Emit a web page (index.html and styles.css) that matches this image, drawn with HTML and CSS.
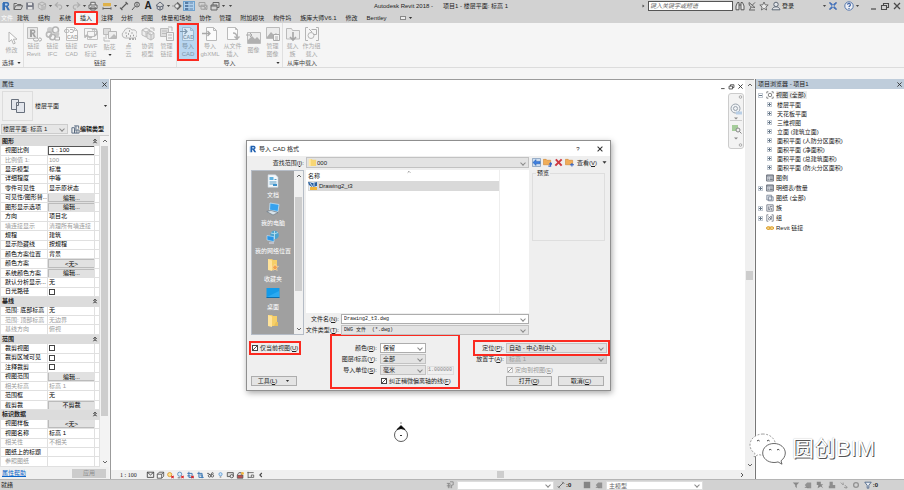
FILE: index.html
```html
<!DOCTYPE html>
<html lang="zh-CN">
<head>
<meta charset="utf-8">
<title>Autodesk Revit 2018</title>
<link rel="stylesheet" href="styles.css">
</head>
<body>
<svg class="defs" aria-hidden="true">
  <symbol id="i-revit" viewBox="0 0 10 10"><path d="M2 1h4.2a2.3 2.3 0 0 1 .6 4.4L9 9.2H6.6L4.8 5.8H4v3.4H2z" fill="#1f5fae"/><path d="M4 2.6h1.700a.9.9 0 0 1 0 1.800H4z" fill="#b9d4f2"/><path d="M1 2v7.200h1V2z" fill="#5b93d4"/></symbol>
  <symbol id="i-open" viewBox="0 0 10 10"><path d="M1 8.500V2.500h2.500l1 1H8v1.200M1 8.500l1.600-3.800H9.600L8 8.500z" fill="none" stroke="#555"/></symbol>
  <symbol id="i-save" viewBox="0 0 10 10"><path d="M1.200 1.500h6.600l1 1v6H1.200z" fill="#666a78"/><path d="M3 2h4v2.300H3zM2.800 6h4.600v2.500H2.800z" fill="#e6e6e6"/></symbol>
  <symbol id="i-sync" viewBox="0 0 10 10"><path d="M5 1l3.600 1.800v4L5 9 1.400 6.800v-4zM1.400 2.800L5 4.600l3.600-1.800M5 4.600V9" fill="none" stroke="#a8a8a8"/><circle cx="7" cy="7" r="2" fill="#b9b9b9"/></symbol>
  <symbol id="i-undo" viewBox="0 0 10 10"><path d="M1.200 4h5a2.200 2.200 0 0 1 0 4.200H5M4 1.400L1.200 4 4 6.400" fill="none" stroke="#a9a9a9" stroke-width="1.200"/></symbol>
  <symbol id="i-redo" viewBox="0 0 10 10"><path d="M8.800 4h-5a2.200 2.200 0 0 0 0 4.200H5M6 1.400L8.800 4 6 6.400" fill="none" stroke="#a9a9a9" stroke-width="1.200"/></symbol>
  <symbol id="i-print" viewBox="0 0 10 10"><path d="M2.800 4V1.300h4.400V4M1 4h8v3.600H1zM2.800 6h4.400v3H2.800z" fill="#eee" stroke="#555"/></symbol>
  <symbol id="i-measure" viewBox="0 0 10 10"><path d="M1 2h8v3.200H1z" fill="#e2ad34"/><path d="M1 7.500h8M1 6.300v2.400M9 6.300v2.400" stroke="#555" fill="none"/></symbol>
  <symbol id="i-dim" viewBox="0 0 10 10"><path d="M2 8L8 2M1 6.600L3.400 9M6.600 1L9 3.400" stroke="#444" fill="none" stroke-width="1.100"/></symbol>
  <symbol id="i-tag" viewBox="0 0 10 10"><circle cx="6" cy="3.600" r="2.400" fill="none" stroke="#444"/><path d="M1 9l3-3.600M6 2.400v2.400" stroke="#444"/></symbol>
  <symbol id="i-3d" viewBox="0 0 10 10"><path d="M1 4.500L5 1l4 3.500L5 6zM2.200 5v2.800L5 9.200l2.800-1.400V5M5 6v3" fill="none" stroke="#4d5566"/></symbol>
  <symbol id="i-section" viewBox="0 0 10 10"><path d="M5.400 1L9.400 5l-4 4zM0 5h3" fill="#444" stroke="#444" stroke-width=".5"/><circle cx="5" cy="5" r="2.300" fill="#eee" stroke="#444" stroke-width=".8"/></symbol>
  <symbol id="i-thin" viewBox="0 0 10 10"><path d="M1 2h3.400M1 5h3.400M1 8h3.400" stroke="#234f83" stroke-width="1.400"/><path d="M5.500 2H9M5.500 5H9M5.500 8H9" stroke="#234f83" stroke-width=".7"/></symbol>
  <symbol id="i-closewin" viewBox="0 0 10 10"><path d="M1 1.500h6v3.800H1zM3 4.200h6v4H3z" fill="none" stroke="#999"/><path d="M5.500 5l3.500 4M9 5L5.500 9" stroke="#999"/></symbol>
  <symbol id="i-switch" viewBox="0 0 10 10"><path d="M1 4h6v5H1zM3 4V1.500h6v5H7M1 5h6" fill="none" stroke="#555"/></symbol>
  <symbol id="i-caret" viewBox="0 0 4 4"><path d="M.4 1h3.200L2 3z" fill="#333"/></symbol>
  <symbol id="i-find" viewBox="0 0 10 10"><path d="M1 8.800V5l1.500-3.500h1.500V8.800zM9 8.800V5L7.500 1.500H6V8.800zM4 4h2" fill="#eee" stroke="#444"/></symbol>
  <symbol id="i-comm" viewBox="0 0 10 10"><path d="M2 1.500c0 4 2 5 6 5M2 1.500l6 5M5.500 4l2.500-2.600M2 9h6M4 6L2.600 9" fill="none" stroke="#555"/></symbol>
  <symbol id="i-star" viewBox="0 0 10 10"><path d="M5 1l1.200 2.800 3 .2-2.300 2 .7 3L5 7.400 2.400 9l.7-3L.8 4l3-.2z" fill="#eee" stroke="#555" stroke-width=".9"/></symbol>
  <symbol id="i-user" viewBox="0 0 10 10"><circle cx="5" cy="3.400" r="2.200" fill="#e5e9ee" stroke="#4b5767"/><path d="M1 8.800c.5-2 2-3 4-3s3.500 1 4 3z" fill="#e5e9ee" stroke="#4b5767"/></symbol>
  <symbol id="i-exch" viewBox="0 0 10 10"><path d="M1 2h2.500L9 8H6.500zM9 2H6.500L1 8h2.500z" fill="#2c62b8"/><path d="M1 1.500h2M7 1.500h2M1 8.500h2M7 8.500h2" stroke="#6a83b0"/></symbol>
  <symbol id="i-help" viewBox="0 0 10 10"><circle cx="5" cy="5" r="4.200" fill="#f2f5fa" stroke="#436aa8"/><path d="M3.600 3.800a1.400 1.400 0 1 1 2 1.300q-.6.300-.6 1M5 7v1" fill="none" stroke="#2c55a0" stroke-width="1.200"/></symbol>
  <symbol id="i-min" viewBox="0 0 10 10"><path d="M3 8h5" stroke="#333" stroke-width="1.200"/></symbol>
  <symbol id="i-restore" viewBox="0 0 10 10"><path d="M1.500 4.500h5v4h-5zM3.500 4.500v-2h5v4h-2" fill="none" stroke="#333" stroke-width="1.100"/></symbol>
  <symbol id="i-x" viewBox="0 0 10 10"><path d="M2 2l6 6M8 2L2 8" stroke="#333" stroke-width="1.300"/></symbol>

  <symbol id="r-arrow" viewBox="0 0 16 16"><path d="M5 2v10l2.600-2.400L9.400 14l1.800-.8-1.800-4H13z" fill="#fcfcfc" stroke="#b5b5b5"/></symbol>
  <symbol id="r-lrevit" viewBox="0 0 16 16"><path d="M1.500 1.500h10v11h-10z" fill="#e8e8e8" stroke="#bbb"/><path d="M4 3.500h3.500a2.200 2.200 0 0 1 .6 4.200L10 11H8L6.300 8H6v3H4zM6 5v1.500h1.300a.7.7 0 0 0 0-1.500z" fill="#a2a2a2"/><path d="M9 12h2a1.500 1.500 0 0 1 0 3H9a1.500 1.500 0 0 1 0-3zm4 0h1a1.500 1.500 0 0 1 0 3h-1" fill="#f5f5f5" stroke="#aaa"/></symbol>
  <symbol id="r-ifc" viewBox="0 0 16 16"><circle cx="5" cy="4" r="3" fill="#ccc"/><circle cx="10.500" cy="4" r="3" fill="none" stroke="#b4b4b4" stroke-width="1.600"/><circle cx="4" cy="8.500" r="2.600" fill="none" stroke="#bababa" stroke-width="1.600"/><circle cx="12" cy="8" r="2.400" fill="#c8c8c8"/><circle cx="7.500" cy="11" r="2.800" fill="none" stroke="#b4b4b4" stroke-width="1.600"/><path d="M10 11h4.500v3H10z" stroke="#aaa" fill="#f5f5f5"/></symbol>
  <symbol id="r-dwf" viewBox="0 0 16 16"><path d="M1.500 2.500h10v8h-10zM4.500 5.500h10v8h-10z" fill="#f5f5f5" stroke="#c0c0c0"/><path d="M2 12c0-3 2-3 3-2s2 3 4 1M9 4q5-3 5 2 0 3-3 4" fill="none" stroke="#b8b8b8" stroke-width="1.500"/></symbol>
  <symbol id="r-decal" viewBox="0 0 16 16"><path d="M1.500 1.500h7v6h-7z" fill="#ddd" stroke="#bbb"/><path d="M6.500 4.500h8v7h-8z" fill="#eee" stroke="#b8b8b8"/><path d="M2 10v4h6M4 8v4" stroke="#bbb" fill="none"/><path d="M8 11l4-4 2 2v2z" fill="#bbb"/></symbol>
  <symbol id="r-cloud" viewBox="0 0 16 16"><path d="M4 12a3.500 3.500 0 0 1-1-6.500A4.500 4.500 0 0 1 11 4a4 4 0 0 1 2 8z" fill="#f1f1f1" stroke="#b8b8b8"/><path d="M4.500 7h1M8 5h1M7 8h1M10.500 7h1M5 10h1M9 10h1M12 9.500h1" stroke="#999" stroke-width="1.500"/><path d="M8 13h7" stroke="#aaa" stroke-width="2" stroke-dasharray="2 1"/></symbol>
  <symbol id="r-coord" viewBox="0 0 16 16"><path d="M2 4l4-2 4 2v5l-4 2-4-2zM2 4l4 2 4-2M6 6v5" fill="#ededed" stroke="#bbb"/><path d="M7 7l4-2 3 2v5l-3 2-4-2zM7 7l4 2 3-2M11 9v5M10 2h4v3" fill="#e3e3e3" stroke="#bbb"/></symbol>
  <symbol id="r-manage" viewBox="0 0 16 16"><path d="M1.500 2.500h8v8h-8zM3 5h5M3 7.500h5" fill="#ddd" stroke="#bcbcbc"/><path d="M7.500 6.500h7v8h-7z" fill="#f2f2f2" stroke="#b5b5b5"/><path d="M9 9h4M9 12h4M9 1h4v4" stroke="#b5b5b5" fill="none"/></symbol>
  <symbol id="r-xml" viewBox="0 0 16 16"><path d="M4.500 1.500h7l3 3v10h-10zM11.500 1.500v3h3" fill="#fbfbfb" stroke="#b9b9b9"/><path d="M0 7.500h8M5.500 5L8 7.500 5.500 10" fill="none" stroke="#a8a8a8" stroke-width="1.300"/></symbol>
  <symbol id="r-file" viewBox="0 0 16 16"><path d="M2.500 1.500h8l2 2v10h-10zM10.500 1.500v2h2" fill="#fbfbfb" stroke="#bbb"/><path d="M8 7q4 0 4 5M9.500 10.500L12 13l2.500-2.500" fill="none" stroke="#b0b0b0" stroke-width="1.400"/></symbol>
  <symbol id="r-image" viewBox="0 0 16 16"><path d="M1.500 2.500h13v11h-13z" fill="#ececec" stroke="#bbb"/><path d="M2 13V10l4-4 3 3 2-2 3 3v3z" fill="#b0b0b0"/><path d="M0 5h6M4 3l2 2-2 2" fill="none" stroke="#aaa"/></symbol>
  <symbol id="r-images" viewBox="0 0 16 16"><path d="M1.500 1.500h13v11h-13z" fill="#ececec" stroke="#bbb"/><path d="M2 11l4-5 3 3 2-2 3 4v1H2z" fill="#b0b0b0"/><path d="M8.500 8.500h6v6h-6zM10 11h3M10 13h3" fill="#f5f5f5" stroke="#aaa"/></symbol>
  <symbol id="r-load" viewBox="0 0 16 16"><path d="M1.500 13V2.500h5l1 2h7V13z" fill="#eee" stroke="#bbb"/><path d="M8 6v8M5 11l3 3 3-3" fill="none" stroke="#a5a5a5" stroke-width="1.600"/></symbol>
  <symbol id="r-group" viewBox="0 0 16 16"><path d="M4 1.500H1.500v13H4M12 1.500h2.500v13H12" fill="none" stroke="#b5b5b5"/><circle cx="7" cy="9.500" r="3" fill="none" stroke="#b5b5b5"/><path d="M7.500 3.500h5v5h-3M5 3l3 3" fill="none" stroke="#b0b0b0"/></symbol>

  <symbol id="i-plan" viewBox="0 0 16 16"><path d="M1.500 1.500h7v10h-7z" fill="#e3e6ec" stroke="#68707d"/><path d="M6.500 4.500h8v10h-8z" fill="#e3e6ec" stroke="#68707d"/><path d="M8.500 4.500v3h-2" fill="none" stroke="#68707d"/></symbol>
  <symbol id="i-edit" viewBox="0 0 10 10"><path d="M1 3h3v6H1zM5.500 1v3.500M3.500 1h5v3M4 5.500h5V9H4zM6.500 5.500V9" fill="none" stroke="#51647c"/></symbol>
  <symbol id="i-chev2" viewBox="0 0 6 6"><path d="M1.500 3L3 1.200 4.500 3M1.500 5.200L3 3.400l1.500 1.800" fill="none" stroke="#222"/></symbol>
  <symbol id="i-up" viewBox="0 0 6 6"><path d="M1 4l2-2 2 2" fill="none" stroke="#666"/></symbol>
  <symbol id="i-down" viewBox="0 0 6 6"><path d="M1 2l2 2 2-2" fill="none" stroke="#666"/></symbol>
  <symbol id="i-right" viewBox="0 0 6 6"><path d="M2 1l2 2-2 2" fill="none" stroke="#555"/></symbol>
  <symbol id="i-left" viewBox="0 0 6 6"><path d="M4 1.500L2.500 3 4 4.500" fill="none" stroke="#444" stroke-width=".8"/></symbol>

  <symbol id="t-views" viewBox="0 0 10 10"><path d="M3 1H1v2M7 1h2v2M3 9H1V7M7 9h2V7" fill="none" stroke="#666"/><circle cx="5" cy="5" r="2.200" fill="none" stroke="#666"/></symbol>
  <symbol id="t-list" viewBox="0 0 10 10"><path d="M.8 1.200h8.400v7.600H.8z" fill="#e9edf3" stroke="#4c5461"/><path d="M1 2.500h8M2 5h1.500M4.500 5h4M2 7h1.500M4.500 7h4" stroke="#4c5461"/></symbol>
  <symbol id="t-sheet" viewBox="0 0 10 10"><path d="M1 1.500h6v6H1zM3 3.500h6v5H3z" fill="#e6ebf1" stroke="#768294"/></symbol>
  <symbol id="t-fam" viewBox="0 0 10 10"><path d="M1 1h8v8H1zM3 3v4h2V3h3M7 5v3" fill="#f2f2f5" stroke="#6b7280"/></symbol>
  <symbol id="t-grp" viewBox="0 0 10 10"><path d="M3 1H1v8h2M7 1h2v8H7M3 3l4 4M5 3h2v3" fill="none" stroke="#6b7280"/><circle cx="4.500" cy="6" r="1.500" fill="none" stroke="#6b7280"/></symbol>
  <symbol id="t-link" viewBox="0 0 10 10"><rect x=".7" y="3.500" width="4.600" height="3.200" rx="1.500" fill="#f5d890" stroke="#d8971d" stroke-width="1.200"/><rect x="4.900" y="3.500" width="4.600" height="3.200" rx="1.500" fill="#f5d890" stroke="#d8971d" stroke-width="1.200"/></symbol>

  <symbol id="p-doc" viewBox="0 0 14 14"><path d="M2 .8h7.500L12 3.300v10H2z" fill="#f4f8fb" stroke="#c5d2dc" stroke-width=".6"/><path d="M3.500 3h4v3h-4z" fill="#5fb4e3"/><path d="M8.500 5.500h2M3.500 8h7M3.500 10h7" stroke="#5a9cc4"/><path d="M7 10h4v2H7z" fill="#3c92cd"/></symbol>
  <symbol id="p-pc" viewBox="0 0 14 14"><path d="M4 1l9 1.500-1 7L3.500 8z" fill="#36a2ee" stroke="#cfe9fa" stroke-width=".7"/><path d="M.8 9.500L5 8.500l7 2-5 2.500z" fill="#d9e3ea" stroke="#567" stroke-width=".5"/></symbol>
  <symbol id="p-net" viewBox="0 0 14 14"><circle cx="8.500" cy="5" r="4.300" fill="#4ba3cf"/><path d="M5 3q4 2 7-.5M8.500 1v8" stroke="#c6e8f2" fill="none" stroke-width=".8"/><path d="M1 5.500l7 1.200v5L1 10z" fill="#2a96e6" stroke="#cfe9fa" stroke-width=".6"/><path d="M3 13h5" stroke="#dde"/></symbol>
  <symbol id="p-fav" viewBox="0 0 14 14"><path d="M2 1h4l1 1h4v10H2z" fill="#f6cf68"/><path d="M2 1l4 1.500V13l-4-1z" fill="#ffe39a"/><path d="M9 6l1 2.200 2.600.2-2 1.600.7 2.600L9 11.200l-2.300 1.400.7-2.600-2-1.600L8 8.200z" fill="#f2a04c" stroke="#fff0c9" stroke-width=".4"/></symbol>
  <symbol id="p-desk" viewBox="0 0 14 14"><path d="M.5 2h13v9.500H.5z" fill="#149be9"/><path d="M1 11L13 5v6z" fill="#2baaf2"/><path d="M.5 11.500h13" stroke="#0c6dad"/></symbol>
  <symbol id="p-lib" viewBox="0 0 14 14"><path d="M2 1h4l1 1h4v10H2z" fill="#f6cf68"/><path d="M2 1l4 1.500V13l-4-1z" fill="#ffe39a"/><path d="M10 8h2v4h-4z" fill="#e8c05b"/></symbol>
  <symbol id="f-folder" viewBox="0 0 10 10"><path d="M1 1h3l1 1h4v7H1z" fill="#f7d675"/><path d="M1 1h2v8H1z" fill="#ffe9a8"/></symbol>
  <symbol id="f-dwg" viewBox="0 0 10 10"><path d="M1 1h8v8H1z" fill="#e9eef6"/><path d="M0 1l5 1 4-1v4L4 6 1 4z" fill="#275f9f"/><path d="M2 6h7v3H2z" fill="#f2b53a"/><path d="M2 2l3 4M6 2v3" stroke="#fff" stroke-width=".8"/></symbol>
  <symbol id="f-back" viewBox="0 0 10 10"><path d="M.5.500h9v9h-9z" fill="#cfdff0" stroke="#8ca4bf"/><path d="M1 5l3.500-3.200v2H9v2.600H4.500v2z" fill="#3d7fe0" stroke="#1e55a8" stroke-width=".5"/></symbol>
  <symbol id="f-up" viewBox="0 0 10 10"><path d="M.5 1.500h3l1 1h4v5h-8z" fill="#f0ad58" stroke="#cc7d28" stroke-width=".6"/><path d="M6 9h2.500V5.500M7 7l1.500-1.700L10 7" fill="none" stroke="#3366c8" stroke-width="1.200"/></symbol>
  <symbol id="f-del" viewBox="0 0 10 10"><path d="M2 1.500l6.500 7M8.500 1.500L1.500 8.500" stroke="#cc3840" stroke-width="2.200"/></symbol>
  <symbol id="f-new" viewBox="0 0 10 10"><path d="M.5 1.500h3l1 1h4v5h-8z" fill="#f0ad58" stroke="#cc7d28" stroke-width=".6"/><path d="M5.500 7.500H10M7.700 5.500v4" stroke="#3366c8" stroke-width="1.200"/></symbol>

  <symbol id="v-detail" viewBox="0 0 10 10"><path d="M1 1.500h8v6.500H1zM1 1.500L5 5l4-3.500" fill="#eee" stroke="#333"/></symbol>
  <symbol id="v-style" viewBox="0 0 10 10"><path d="M1 4h5.500v5H1zM1 4l2.500-2.500H9L6.500 4M9 1.500V6.500L6.500 9" fill="#f5f5f5" stroke="#444"/></symbol>
  <symbol id="v-sun" viewBox="0 0 10 10"><circle cx="4" cy="4.500" r="2.600" fill="#ffe28b" stroke="#d5952c"/><path d="M6 6l3 3M9 6L6 9" stroke="#d22" stroke-width="1.300"/></symbol>
  <symbol id="v-shadow" viewBox="0 0 10 10"><circle cx="4" cy="4" r="2.600" fill="#dcecf8" stroke="#4c86b8"/><path d="M1.500 8.500H5" stroke="#555"/><path d="M6 6l3 3M9 6L6 9" stroke="#d22" stroke-width="1.300"/></symbol>
  <symbol id="v-crop" viewBox="0 0 10 10"><path d="M3 1v7h6M1 3h6v6M1 6h4" fill="none" stroke="#3e79b5" stroke-width="1.200"/><path d="M6 6l3 3M9 6L6 9" stroke="#d22" stroke-width="1.300"/></symbol>
  <symbol id="v-crop2" viewBox="0 0 10 10"><path d="M3 1v7h6M1 3h6v6M4 5h3v3" fill="none" stroke="#3e79b5" stroke-width="1.200"/></symbol>
  <symbol id="v-glass" viewBox="0 0 10 10"><path d="M.8 3h2l1.500 2M9 3L7 2 5.500 5" fill="none" stroke="#444"/><circle cx="3.800" cy="6" r="1.600" fill="none" stroke="#444"/><circle cx="7.300" cy="6" r="1.600" fill="none" stroke="#444"/></symbol>
  <symbol id="v-bulb" viewBox="0 0 10 10"><circle cx="5" cy="4" r="2" fill="#cde6fb" stroke="#5a97cf"/><path d="M4 7.500h2" stroke="#555"/></symbol>
  <symbol id="v-temp" viewBox="0 0 10 10"><path d="M1 2h7.500v5H1z" fill="#ddd" stroke="#444"/><circle cx="6.500" cy="6.500" r="2" fill="#eee" stroke="#444"/></symbol>
  <symbol id="v-anal" viewBox="0 0 10 10"><path d="M1 5h7v4H1z" fill="#c05050" stroke="#555"/><path d="M1 5l2-3h3v3" fill="#ddd" stroke="#555"/><circle cx="7.500" cy="3" r="1.800" fill="#f5b63c"/></symbol>
  <symbol id="v-cons" viewBox="0 0 10 10"><path d="M1 2h8M2 1v8M2 8h4M6 5h3v3H6z" fill="none" stroke="#555"/></symbol>

  <symbol id="s-a" viewBox="0 0 10 10"><path d="M1 2h8L6 5v4L4 7V5z" fill="#7d7d7d"/></symbol>
  <symbol id="s-b" viewBox="0 0 10 10"><path d="M1 5l3-3h5v7H4z" fill="#878787"/><path d="M1 8h5" stroke="#777"/></symbol>
  <symbol id="s-c" viewBox="0 0 10 10"><path d="M1 1h5v3h3L7 6l2 3-3-2-4 2 1-4H1z" fill="#7a7a7a"/></symbol>
  <symbol id="s-d" viewBox="0 0 10 10"><path d="M2 1h4v4h3v4H1V6h1z" fill="#828282"/></symbol>
  <symbol id="s-sq" viewBox="0 0 10 10"><path d="M1 1h8v8H1z" fill="#777"/></symbol>
  <symbol id="s-e" viewBox="0 0 10 10"><path d="M1 2l3 3V2M5 8h4M6 5l3 3-2 1.500" fill="none" stroke="#888"/></symbol>
  <symbol id="s-gear" viewBox="0 0 10 10"><circle cx="5" cy="5" r="3" fill="none" stroke="#888" stroke-width="1.600"/></symbol>
  <symbol id="s-filter" viewBox="0 0 10 10"><path d="M1 1.500h8L6 5.500v3.500H4V5.500z" fill="#e7edf5" stroke="#3f5a80"/></symbol>
  <symbol id="s-work" viewBox="0 0 10 10"><path d="M1 3h4v6M3 3v6M5 1h4v4H7v4M1 6h4" fill="none" stroke="#777"/></symbol>
</svg>

<header class="titlebar">
  <div class="qat">
    <svg class="cell"><use href="#i-revit"/></svg>
    <svg class="cell"><use href="#i-open"/></svg>
    <svg class="cell"><use href="#i-save"/></svg>
    <svg class="cell"><use href="#i-sync"/></svg>
    <svg class="caret"><use href="#i-caret"/></svg>
    <svg class="cell"><use href="#i-undo"/></svg>
    <svg class="caret"><use href="#i-caret"/></svg>
    <svg class="cell"><use href="#i-redo"/></svg>
    <svg class="caret"><use href="#i-caret"/></svg>
    <svg class="cell"><use href="#i-print"/></svg>
    <span class="sep"></span>
    <svg class="cell"><use href="#i-measure"/></svg>
    <svg class="caret"><use href="#i-caret"/></svg>
    <svg class="cell"><use href="#i-dim"/></svg>
    <svg class="cell"><use href="#i-tag"/></svg>
    <b class="letter">A</b>
    <svg class="cell"><use href="#i-3d"/></svg>
    <svg class="caret"><use href="#i-caret"/></svg>
    <svg class="cell"><use href="#i-section"/></svg>
    <svg class="cell on"><use href="#i-thin"/></svg>
    <span class="sep"></span>
    <svg class="cell"><use href="#i-closewin"/></svg>
    <svg class="cell"><use href="#i-switch"/></svg>
    <svg class="caret"><use href="#i-caret"/></svg>
    <span class="sep"></span>
    <svg class="caret"><use href="#i-caret"/></svg>
  </div>
  <p class="apptitle"><span>Autodesk Revit 2018 -</span><span>项目1 - 楼层平面: 标高 1</span></p>
  <div class="infocenter">
    <svg class="caret turned"><use href="#i-caret"/></svg>
    <input class="search" type="text" placeholder="键入关键字或短语" aria-label="搜索">
    <svg class="cell"><use href="#i-find"/></svg>
    <svg class="cell"><use href="#i-comm"/></svg>
    <svg class="cell"><use href="#i-star"/></svg>
    <svg class="cell"><use href="#i-user"/></svg>
    <a class="login" href="#">登录</a>
    <svg class="caret"><use href="#i-caret"/></svg>
    <svg class="cell"><use href="#i-exch"/></svg>
    <svg class="cell help"><use href="#i-help"/></svg>
    <svg class="caret"><use href="#i-caret"/></svg>
  </div>
  <div class="winctl">
    <button aria-label="最小化"><svg><use href="#i-min"/></svg></button>
    <button aria-label="还原"><svg><use href="#i-restore"/></svg></button>
    <button aria-label="关闭"><svg><use href="#i-x"/></svg></button>
  </div>
</header>

<nav class="tabs">
  <div class="tabgroup wide"><a class="file" href="#">文件</a><a href="#">建筑</a><a href="#">结构</a><a href="#">系统</a><a class="active" href="#">插入</a><a href="#">注释</a></div>
  <div class="tabgroup"><a href="#">分析</a><a href="#">视图</a><a href="#">体量和场地</a><a href="#">协作</a><a href="#">管理</a></div>
  <div class="tabgroup wide last"><a href="#">附加模块</a><a href="#">构件坞</a><a href="#">族库大师V6.1</a><a href="#">修改</a><a href="#">Bentley</a></div>
  <button class="tabmenu" aria-label="选项卡显示"><span></span><svg class="caret"><use href="#i-caret"/></svg></button>
</nav>

<section class="ribbon">
  <div class="panel">
    <div class="tools"><button class="tool w24"><svg><use href="#r-arrow"/></svg>修改</button></div>
    <h2 class="caption dark">选择 <svg><use href="#i-caret"/></svg></h2>
  </div>
  <div class="panel">
    <div class="tools">
      <button class="tool"><svg><use href="#r-lrevit"/></svg>链接<br>Revit</button>
      <button class="tool"><svg><use href="#r-ifc"/></svg>链接<br>IFC</button>
      <button class="tool"><svg viewBox="0 0 16 16"><path d="M2.500 1.500h8l3 3v10h-11zM10.500 1.500v3h3" fill="#fafafa" stroke="#c0c0c0"/><path d="M2 3.500h1.500a1.500 1.500 0 0 1 0 3H2a1.500 1.500 0 0 1 0-3zm4 0h2a1.500 1.500 0 0 1 0 3H6" fill="none" stroke="#b5b5b5"/><text x="3" y="13" class="glyph">CAD</text></svg>链接<br>CAD</button>
      <button class="tool"><svg><use href="#r-dwf"/></svg>DWF<br>标记</button>
      <button class="tool"><svg><use href="#r-decal"/></svg>贴花<svg class="drop"><use href="#i-caret"/></svg></button>
      <button class="tool"><svg><use href="#r-cloud"/></svg>点<br>云</button>
      <button class="tool"><svg><use href="#r-coord"/></svg>协调<br>模型</button>
      <button class="tool"><svg><use href="#r-manage"/></svg>管理<br>链接</button>
    </div>
    <h2 class="caption">链接</h2>
  </div>
  <div class="panel">
    <div class="tools">
      <button class="tool w22 selected"><svg viewBox="0 0 16 16"><path d="M2.500 1.500h8l3 3v10h-11zM10.500 1.500v3h3" fill="#d9e9f7" stroke="#9cb9d2"/><path d="M0 5.500h7M4.500 3L7 5.500 4.500 8" fill="none" stroke="#7f98ae" stroke-width="1.200"/><text x="3" y="13" class="glyph glyph-on">CAD</text></svg>导入<br>CAD</button>
      <button class="tool w22"><svg><use href="#r-xml"/></svg>导入<br>gbXML</button>
      <button class="tool w24"><svg><use href="#r-file"/></svg>从文件<br>插入</button>
      <button class="tool"><svg><use href="#r-image"/></svg>图像</button>
      <button class="tool"><svg><use href="#r-images"/></svg>管理<br>图像</button>
    </div>
    <h2 class="caption launcher">导入<svg><use href="#i-caret"/></svg></h2>
  </div>
  <div class="panel">
    <div class="tools">
      <button class="tool"><svg><use href="#r-load"/></svg>载入<br>族</button>
      <button class="tool"><svg><use href="#r-group"/></svg>作为组<br>载入</button>
    </div>
    <h2 class="caption">从库中载入</h2>
  </div>
</section>

<main class="workspace">
  <aside class="props">
    <h2 class="dockhead">属性<svg><use href="#i-x"/></svg></h2>
    <div class="typesel"><span class="thumb"><svg><use href="#i-plan"/></svg></span><span>楼层平面</span><svg class="caret"><use href="#i-caret"/></svg></div>
    <div class="instance">
      <span class="pick"><select aria-label="实例"><option>楼层平面: 标高 1</option></select></span>
      <button><svg><use href="#i-edit"/></svg>编辑类型</button>
    </div>
    <div class="gridwrap">
      <table class="grid">
        <colgroup><col class="c-name"><col class="c-val"><col class="c-btn"></colgroup>
        <tbody>
        <tr class="group"><th colspan="2">图形</th><td><svg><use href="#i-chev2"/></svg></td></tr>
        <tr><th><label for="scale">视图比例</label></th><td><input id="scale" class="box" value="1 : 100"></td><td></td></tr>
        <tr class="off"><th>比例值 1:</th><td>100</td><td></td></tr>
        <tr><th>显示模型</th><td>标准</td><td></td></tr>
        <tr><th>详细程度</th><td>中等</td><td></td></tr>
        <tr><th>零件可见性</th><td>显示原状态</td><td></td></tr>
        <tr><th>可见性/图形替...</th><td><button>编辑...</button></td><td></td></tr>
        <tr><th>图形显示选项</th><td><button>编辑...</button></td><td></td></tr>
        <tr><th>方向</th><td>项目北</td><td></td></tr>
        <tr class="off"><th>墙连接显示</th><td>清理所有墙连接</td><td></td></tr>
        <tr><th>规程</th><td>建筑</td><td></td></tr>
        <tr><th>显示隐藏线</th><td>按规程</td><td></td></tr>
        <tr><th>颜色方案位置</th><td>背景</td><td></td></tr>
        <tr><th>颜色方案</th><td><button>&lt;无&gt;</button></td><td></td></tr>
        <tr><th>系统颜色方案</th><td><button>编辑...</button></td><td></td></tr>
        <tr><th>默认分析显示...</th><td>无</td><td></td></tr>
        <tr><th><label for="sun">日光路径</label></th><td><input id="sun" type="checkbox"></td><td></td></tr>
        <tr class="group"><th colspan="2">基线</th><td><svg><use href="#i-chev2"/></svg></td></tr>
        <tr><th>范围: 底部标高</th><td>无</td><td></td></tr>
        <tr class="off"><th>范围: 顶部标高</th><td>无边界</td><td></td></tr>
        <tr class="off"><th>基线方向</th><td>俯视</td><td></td></tr>
        <tr class="group"><th colspan="2">范围</th><td><svg><use href="#i-chev2"/></svg></td></tr>
        <tr><th><label for="crop">裁剪视图</label></th><td><input id="crop" type="checkbox"></td><td></td></tr>
        <tr><th><label for="cropvis">裁剪区域可见</label></th><td><input id="cropvis" type="checkbox"></td><td></td></tr>
        <tr><th><label for="anno">注释裁剪</label></th><td><input id="anno" type="checkbox"></td><td></td></tr>
        <tr><th>视图范围</th><td><button>编辑...</button></td><td></td></tr>
        <tr class="off"><th>相关标高</th><td>标高 1</td><td></td></tr>
        <tr><th>范围框</th><td>无</td><td></td></tr>
        <tr><th>截剪裁</th><td><button>不剪裁</button></td><td></td></tr>
        <tr class="group"><th colspan="2">标识数据</th><td><svg><use href="#i-chev2"/></svg></td></tr>
        <tr><th>视图样板</th><td><button>&lt;无&gt;</button></td><td></td></tr>
        <tr><th>视图名称</th><td>标高 1</td><td></td></tr>
        <tr class="off"><th>相关性</th><td>不相关</td><td></td></tr>
        <tr><th>图纸上的标题</th><td></td><td></td></tr>
        <tr class="off"><th>参照图纸</th><td></td><td></td></tr>
        </tbody>
      </table>
      <div class="vscroll"><svg><use href="#i-up"/></svg><span class="thumbbar"></span><svg><use href="#i-down"/></svg></div>
    </div>
    <footer class="propfoot"><a href="#">属性帮助</a><button disabled>应用</button></footer>
  </aside>

  <section class="view">
    <div class="drawing">
      <div class="sheet">
        <svg class="marker" viewBox="0 0 16 22"><path d="M7 1h2" stroke="#888"/><circle cx="8" cy="13" r="6.500" fill="#fff" stroke="#333" stroke-width=".8"/><path d="M4 7.500L8 3.500l4 4Q8 5.500 4 7.500z" fill="#000" stroke="#000" stroke-width=".7"/><path d="M7 13.500h2" stroke="#333"/></svg>
        <div class="mdi"><svg><use href="#i-min"/></svg><svg><use href="#i-restore"/></svg><svg><use href="#i-x"/></svg></div>
        <div class="navbar">
          <svg viewBox="0 0 14 54"><circle cx="11.500" cy="3" r="1.300" fill="none" stroke="#aaa"/><circle cx="6.500" cy="14.500" r="4.500" fill="#eef1f4" stroke="#9aa3ad"/><circle cx="6.500" cy="14.500" r="2" fill="none" stroke="#9aa3ad"/><path d="M7 17.500h6v3H7z" fill="#b9cfe6"/><path d="M5 23.500h4l-2 2zM5 43.500h4l-2 2z" fill="#888"/><path d="M1 26.500h12" stroke="#ccc"/><path d="M3 31h6v6H3z" fill="#a5cc9a"/><circle cx="9" cy="36" r="2" fill="#eee" stroke="#888"/><path d="M10.500 37.500l2 2" stroke="#888"/><circle cx="11.500" cy="51" r="1.300" fill="none" stroke="#aaa"/></svg>
        </div>
      </div>
      <div class="vscroll"><svg><use href="#i-up"/></svg><span class="thumbbar"></span><svg><use href="#i-down"/></svg></div>
    </div>
    <div class="viewbar">
      <span class="ratio">1 : 100</span>
      <div class="viewicons">
        <svg><use href="#v-detail"/></svg><svg><use href="#v-style"/></svg><svg><use href="#v-sun"/></svg><svg><use href="#v-shadow"/></svg><svg><use href="#v-crop"/></svg><svg><use href="#v-crop2"/></svg><svg><use href="#v-glass"/></svg><svg><use href="#v-bulb"/></svg><svg><use href="#v-temp"/></svg><svg><use href="#v-anal"/></svg><svg><use href="#v-cons"/></svg><svg><use href="#i-left"/></svg>
      </div>
      <div class="hscroll"><span class="thumbbar"></span><svg><use href="#i-right"/></svg></div>
    </div>
  </section>

  <aside class="browser">
    <h2 class="dockhead">项目浏览器 - 项目1<svg><use href="#i-x"/></svg></h2>
    <ul class="tree">
      <li><div class="node"><i class="exp"></i><svg><use href="#t-views"/></svg><span class="hot">视图 (全部)</span></div>
        <ul>
          <li><i class="exp plus"></i>楼层平面</li>
          <li><i class="exp plus"></i>天花板平面</li>
          <li><i class="exp plus"></i>三维视图</li>
          <li><i class="exp plus"></i>立面 (建筑立面)</li>
          <li><i class="exp plus"></i>面积平面 (人防分区面积)</li>
          <li><i class="exp plus"></i>面积平面 (净面积)</li>
          <li><i class="exp plus"></i>面积平面 (总建筑面积)</li>
          <li><i class="exp plus"></i>面积平面 (防火分区面积)</li>
        </ul>
      </li>
      <li><div class="node"><i class="exp none"></i><svg><use href="#t-list"/></svg><span>图例</span></div></li>
      <li><div class="node"><i class="exp plus"></i><svg><use href="#t-list"/></svg><span>明细表/数量</span></div></li>
      <li><div class="node"><i class="exp none"></i><svg><use href="#t-sheet"/></svg><span>图纸 (全部)</span></div></li>
      <li><div class="node"><i class="exp plus"></i><svg><use href="#t-fam"/></svg><span>族</span></div></li>
      <li><div class="node"><i class="exp plus"></i><svg><use href="#t-grp"/></svg><span>组</span></div></li>
      <li><div class="node"><i class="exp none"></i><svg><use href="#t-link"/></svg><span>Revit 链接</span></div></li>
    </ul>
  </aside>

  <div class="watermark">
    <svg viewBox="0 0 38 34"><g fill="#fff" stroke="#888" stroke-width=".8"><path d="M14 2C6.500 2 1 7 1 13c0 3.500 2 6.500 5 8.500L5 25l4.500-2.500c1.500.5 3 .7 4.500.7 7.500 0 12.500-4.500 12.500-10.200S21.500 2 14 2z" stroke-dasharray="2 1.500"/><path d="M25 11.500c-6.500 0-11.300 4.300-11.300 9.500S18.500 30.500 25 30.500c1.400 0 2.800-.2 4-.6l4 2.300-1-3.400c2.500-1.800 4.300-4.600 4.300-7.800 0-5.200-4.800-9.500-11.300-9.500z" stroke="#444"/></g><path d="M8 9q1.300-1.500 2.600 0M18 9q1.300-1.500 2.600 0M20 18q1.200-1.300 2.400 0M28 18q1.200-1.300 2.400 0" fill="none" stroke="#444"/></svg>
    <span>圆创BIM</span>
  </div>
</main>

<footer class="status">
  <span class="ready">就绪</span>
  <svg><use href="#s-work"/></svg>
  <span class="pick"><select aria-label="工作集"><option></option></select></span>
  <svg><use href="#i-dim"/></svg><span class="count">:0</span>
  <svg><use href="#s-sq"/></svg><svg><use href="#s-b"/></svg>
  <span class="pick"><select aria-label="设计选项"><option>主模型</option></select></span>
  <div class="selicons"><svg><use href="#s-a"/></svg><svg><use href="#s-b"/></svg><svg><use href="#s-c"/></svg><svg><use href="#s-d"/></svg><svg><use href="#s-e"/></svg><svg><use href="#s-gear"/></svg><svg><use href="#s-filter"/></svg><span>:0</span></div>
</footer>

<form class="dialog" role="dialog" aria-labelledby="dlgtitle">
  <header class="dlghead"><svg><use href="#i-revit"/></svg><h1 id="dlgtitle">导入 CAD 格式</h1><button type="button">?</button><button type="button" aria-label="关闭"><svg><use href="#i-x"/></svg></button></header>
  <div class="dlgtop">
    <label for="lookin">查找范围(<u>I</u>):</label>
    <span class="pick grey withicon"><svg><use href="#f-folder"/></svg><select id="lookin"><option>000</option></select></span>
    <div class="dlgtools"><svg><use href="#f-back"/></svg><svg><use href="#f-up"/></svg><svg><use href="#f-del"/></svg><svg><use href="#f-new"/></svg><button type="button">查看(<u>V</u>)</button><svg class="caret"><use href="#i-caret"/></svg></div>
  </div>
  <div class="dlgmid">
    <div class="places">
      <ul>
        <li><svg><use href="#p-doc"/></svg>文档</li>
        <li><svg><use href="#p-pc"/></svg>我的电脑</li>
        <li><svg><use href="#p-net"/></svg>我的网络位置</li>
        <li><svg><use href="#p-fav"/></svg>收藏夹</li>
        <li><svg><use href="#p-desk"/></svg>桌面</li>
        <li><svg><use href="#p-lib"/></svg></li>
      </ul>
      <div class="vscroll"><svg><use href="#i-up"/></svg><span class="thumbbar"></span><svg><use href="#i-down"/></svg></div>
    </div>
    <div class="centre">
      <div class="files">
        <div class="listing"><div class="colhead">名称<svg><use href="#i-up"/></svg></div><div class="filerow"><svg><use href="#f-dwg"/></svg>Drawing2_t3</div></div>
      </div>
      <div class="namerow"><label for="fname">文件名(<u>N</u>):</label><span class="pick"><input id="fname" type="text" value="Drawing2_t3.dwg"></span></div>
      <div class="namerow"><label for="ftype">文件类型(<u>T</u>):</label><span class="pick grey"><select id="ftype" class="mono"><option>DWG 文件 &nbsp;(*.dwg)</option></select></span></div>
    </div>
    <fieldset class="preview"><legend>预览</legend></fieldset>
  </div>
  <div class="dlgopts">
    <div class="optleft">
      <label class="check marked"><input type="checkbox" checked><span>仅当前视图(<u>U</u>)</span></label>
      <button type="button" class="btn"><span>工具(<u>L</u>)</span><svg class="caret"><use href="#i-caret"/></svg></button>
    </div>
    <div class="optmid marked">
      <label for="color">颜色(<u>R</u>):</label><span class="pick"><select id="color"><option>保留</option></select></span>
      <label for="level">图层/标高(<u>Y</u>):</label><span class="pick grey"><select id="level"><option>全部</option></select></span>
      <label for="unit">导入单位(<u>S</u>):</label><span class="pick grey"><select id="unit"><option>毫米</option></select></span><input class="factor" aria-label="比例系数" value="1.000000" disabled>
      <label class="check fix"><input type="checkbox" checked><span>纠正稍微偏离轴的线(<u>F</u>)</span></label>
    </div>
    <div class="optright">
      <div class="place marked"><label for="pos">定位(<u>P</u>):</label><span class="pick grey"><select id="pos"><option>自动 - 中心到中心</option></select></span></div>
      <div class="place off"><label for="at">放置于(<u>A</u>):</label><span class="pick grey"><select id="at" disabled><option>标高 1</option></select></span></div>
      <label class="check off"><input type="checkbox" checked disabled><span>定向到视图(<u>E</u>)</span></label>
      <div class="actions"><button type="submit" class="btn"><span>打开(<u>O</u>)</span></button><button type="button" class="btn"><span>取消(<u>C</u>)</span></button></div>
    </div>
  </div>
</form>
</body>
</html>
```
FILE: styles.css
```css
:root {
  --bar: #d2d2d2;
  --face: #f0f0f0;
  --line: #9b9b9b;
  --red: #fb2a20;
}

* { box-sizing: border-box; }

body {
  margin: 0;
  height: 100vh;
  display: flex;
  flex-direction: column;
  position: relative;
  overflow: hidden;
  background: #f5f5f5;
  color: #222;
  font: 6px/8px "Liberation Sans", "Noto Sans CJK SC", sans-serif;
}

h1, h2, p, ul { margin: 0; padding: 0; font: inherit; list-style: none; }
a { color: inherit; text-decoration: none; }
button, input, select { font: inherit; color: inherit; margin: 0; padding: 0; border: 0; border-radius: 0; background: none; appearance: none; min-width: 0; }
select:disabled { opacity: 1; }
svg { display: block; flex: none; width: 10px; height: 10px; }
.defs { position: absolute; width: 0; height: 0; }
.glyph { font-size: 5px; font-weight: bold; fill: #aaa; stroke: none; }
.glyph-on { fill: #7f98ae; }

input[type="checkbox"] {
  flex: none;
  display: block;
  width: 6px;
  height: 6px;
  border: 1px solid #444;
  background: #fff;
}
input[type="checkbox"]:checked { background: linear-gradient(135deg, #fff 45%, #555 45%, #555 60%, #fff 60%); }

/* Drop-down shell: the chevron is drawn over the native control */
.pick { position: relative; display: flex; align-items: center; min-width: 0; border: 1px solid #adadad; background: #fff; }
.pick.grey { background: #e3e3e3; border-color: #c2c2c2; }
.pick select, .pick input { flex: 1; width: 100%; height: 100%; padding-left: 2px; line-height: 8px; }
.pick::after {
  content: "";
  position: absolute;
  right: 3px;
  top: calc(50% - 2px);
  width: 3px;
  height: 3px;
  border: solid #8a8a8a;
  border-width: 0 1px 1px 0;
  transform: rotate(45deg);
  pointer-events: none;
}

/* Title bar */
.titlebar { flex: none; display: flex; align-items: center; height: 12px; background: var(--bar); }
.titlebar svg { opacity: .85; }
.qat { display: flex; align-items: center; width: 374px; }
.cell { width: 12px; height: 10px; }
.cell.on { background: #a9d0f2; outline: 1px solid #5f9bcf; outline-offset: -1px; }
.caret { width: 5px; height: 4px; }
.turned { transform: rotate(-90deg); }
.sep { width: 2px; }
.letter { width: 12px; text-align: center; font-size: 10px; }
.apptitle { display: flex; gap: 10px; flex: 1; white-space: nowrap; }
.infocenter { display: flex; align-items: center; }
.search { width: 85px; height: 10px; margin: 0 1px 1px 2px; padding-left: 1px; border: 1px solid #555; background: #fff; font-style: italic; }
.search::placeholder { color: #666; opacity: 1; }
.login { width: 40px; }
.help { margin-left: 4px; }
.winctl { display: flex; margin-left: 8px; }
.winctl button { width: 12px; }

/* Ribbon tabs */
.tabs { flex: none; display: flex; align-items: stretch; height: 11px; background: var(--bar); }
.tabgroup { display: flex; gap: 8px; align-items: center; margin-left: 9px; }
.tabgroup.wide { gap: 9px; }
.tabgroup.wide:first-child { margin-left: 1px; }
.tabgroup:nth-child(2) { margin-left: 8px; }
.file { color: #fff; margin-right: -5px; }
.tabs a { padding: 2px 0; line-height: 8px; }
.tabs .active { margin: -1px -6px; padding: 1px 4px; background: #f5f5f5; border: 2px solid var(--red); border-radius: 1px; position: relative; z-index: 1; }
.tabmenu { display: flex; align-items: center; gap: 2px; margin-left: 13px; }
.tabmenu span { width: 6px; height: 4px; border: 1px solid #888; background: #eee; }

/* Ribbon */
.ribbon { flex: none; display: flex; height: 45px; margin-bottom: 11px; border-bottom: 1px solid #dcdcdc; }
.panel { display: flex; flex-direction: column; border-right: 1px solid #e0e0e0; }
.panel:last-child { border: 0; }
.tools { display: flex; flex: 1; min-height: 0; }
.tool { width: 19px; padding-top: 2px; display: block; align-self: flex-start; height: 36px; color: #a9a9a9; line-height: 8px; text-align: center; white-space: nowrap; }
.tool svg { width: 16px; height: 16px; margin: 0 auto; }
.tool .drop { width: 4px; height: 4px; margin-top: 2px; }
.w22 { width: 22px; }
.w24 { width: 23px; }
.selected { background: #b9d6f0; border: 2px solid var(--red); padding-top: 0; color: #7d95aa; height: 38px; }
.caption { flex: none; display: flex; justify-content: center; align-items: center; height: 9px; color: #444; }
.caption svg { width: 4px; height: 4px; margin-left: 3px; }
.launcher { position: relative; }
.launcher svg { position: absolute; right: 2px; }

/* Workspace */
.workspace { flex: 1; min-height: 0; display: flex; position: relative; }
.dockhead { flex: none; display: flex; justify-content: space-between; align-items: center; height: 10px; padding: 0 1px 0 2px; background: #bfcddb; }
.dockhead svg { width: 7px; height: 7px; }

.props { width: 109px; display: flex; flex-direction: column; background: var(--face); }
.typesel { flex: none; display: flex; align-items: center; gap: 2px; height: 34px; padding-left: 2px; }
.typesel .caret { margin: 0 1px 0 auto; }
.thumb { display: grid; place-items: center; width: 31px; height: 30px; border: 1px solid #ddd; }
.thumb svg { width: 16px; height: 16px; }
.instance { flex: none; display: flex; height: 12px; padding: 1px; gap: 3px; }
.instance .pick { width: 67px; background: #e6e6e6; border-color: #ccc; }
.instance .pick select { padding-left: 1px; }
.instance button { display: flex; align-items: center; font-weight: bold; white-space: nowrap; }
.instance button svg { width: 9px; height: 9px; }
.gridwrap { flex: 1; min-height: 0; display: flex; border-top: 1px solid #ccc; }
.grid { flex: 1; width: 99px; height: 100%; table-layout: fixed; border-collapse: collapse; background: #fff; }
.c-name { width: 47px; }
.c-val { width: 47px; }
.c-btn { width: 5px; }
.grid th, .grid td { padding: 0 0 0 1px; border: 1px solid #e0e0e0; line-height: 7px; font-weight: normal; text-align: left; white-space: nowrap; overflow: hidden; color: #000; }
.grid th { padding-left: 4px; }
.grid .off th, .grid .off td { color: #999; }
.grid .group th, .grid .group td { background: #dcdcdc; padding-left: 1px; border-color: #dcdcdc; }
.grid .group th { color: #222; font-weight: bold; }
.grid .group td { overflow: visible; padding: 0; }
.grid td svg { width: 6px; height: 6px; margin-left: -3px; }
.grid button { display: block; width: 100%; height: 7px; line-height: 6px; background: #e1e1e1; box-shadow: 0 0 0 1px #bbb; }
.box { display: block; width: 100%; height: 7px; padding-left: 2px; box-shadow: 0 0 0 1px #555; }
.propfoot { flex: none; display: flex; justify-content: space-between; align-items: center; height: 12px; padding: 0 3px 0 2px; }
.propfoot a { color: #0a64c8; text-decoration: underline; }
.propfoot button { width: 34px; height: 9px; background: #ccc; color: #8c8c8c; }

.vscroll { flex: none; width: 9px; display: flex; flex-direction: column; align-items: center; background: var(--face); padding: 2px 0; }
.vscroll svg { width: 6px; height: 6px; }
.thumbbar { background: #cdcdcd; }
.props .vscroll { background: #f3f3f3; justify-content: space-between; }
.props .vscroll .thumbbar { flex: 1; width: 7px; margin: 2px 0 43px; }

.view { flex: 1; min-width: 0; display: flex; flex-direction: column; margin-left: 1px; border: solid var(--line); border-width: 1px 0 0 1px; }
.drawing { flex: 1; min-height: 0; display: flex; }
.sheet { flex: 1; position: relative; background: #fff; }
.marker { position: absolute; left: calc(50% - 35px); top: calc(88% - 1px); width: 16px; height: 22px; }
.mdi { position: absolute; top: 3px; right: 0; display: flex; }
.mdi svg { width: 9px; height: 7px; }
.navbar { position: absolute; top: 13px; right: 1px; width: 16px; border: 1px solid #ccc; border-radius: 3px; background: #f3f3f3; }
.navbar svg { width: 14px; height: 54px; }
.drawing .vscroll { justify-content: space-between; }
.drawing .thumbbar { width: 7px; height: 9px; }
.viewbar { flex: none; display: flex; align-items: center; height: 9px; background: var(--face); }
.ratio { width: 35px; padding-left: 9px; font-family: "Liberation Serif", serif; white-space: nowrap; }
.viewicons { display: flex; gap: 1px; }
.viewicons svg { width: 9px; height: 8px; }
.hscroll { flex: 1; display: flex; align-items: center; justify-content: space-between; padding-left: 232px; padding-right: 9px; }
.hscroll svg { width: 6px; height: 6px; }
.hscroll .thumbbar { width: 7px; height: 7px; }

.browser { width: 149px; background: #fff; border-left: 1px solid #777; margin-left: 1px; }
.browser .dockhead { color: #222; }
.tree { padding-top: 1px; }
.node { display: flex; align-items: center; height: 10px; padding-left: 2px; color: #222; }
.node svg { width: 8px; height: 8px; margin: 0 2px 0 3px; }
.hot { background: #ececec; padding-right: 1px; }
.tree ul { margin: 0 0 1px 11px; color: #222; }
.tree ul li { display: flex; align-items: center; height: 9px; }
.exp {
  flex: none;
  width: 5px;
  height: 5px;
  border: 1px solid #c3cad3;
  background: linear-gradient(#678, #678) center / 3px 1px no-repeat;
}
.exp.plus { background: linear-gradient(#678, #678) center / 3px 1px no-repeat, linear-gradient(#678, #678) center / 1px 3px no-repeat; }
.exp.none { border-color: transparent; background: none; }
.tree ul .exp { margin-right: 5px; }

.watermark { position: absolute; right: 29px; bottom: 13px; display: flex; align-items: center; gap: 5px; color: #fff; text-shadow: 1px 1px 0 #555, 0 0 1px #aaa; font-size: 22px; line-height: 28px; }
.watermark svg { width: 38px; height: 34px; }

/* Status bar */
.status { flex: none; display: flex; align-items: center; height: 11px; background: var(--bar); border-top: 1px solid #b5b5b5; }
.ready { width: 445px; padding-left: 1px; }
.status svg { width: 10px; height: 8px; margin-right: 2px; opacity: .85; }
.status .pick { width: 97px; height: 9px; border-color: #ddd; color: #666; }
.status > .pick + svg { margin-left: 2px; margin-right: 0; }
.count { width: 16px; font-weight: bold; }
.selicons { display: flex; align-items: center; margin-left: auto; padding-right: 26px; font-weight: bold; }
.selicons svg:nth-last-child(2) { margin-right: 0; opacity: 1; }

/* Import dialog, a window floating over the workspace */
.dialog { position: absolute; left: 246px; top: 140px; width: 365px; padding-bottom: 4px; background: #efefef; border: 1px solid #8f8f8f; box-shadow: 1px 2px 6px rgba(0, 0, 0, .35); }
.dialog label { white-space: nowrap; }
.dlghead { display: flex; align-items: center; height: 15px; padding-left: 2px; background: #fff; gap: 2px; }
.dlghead svg { width: 8px; height: 8px; }
.dlghead h1 { flex: 1; }
.dlghead button { width: 20px; display: grid; place-items: center; }
.dlgtop { display: grid; grid-template-columns: 53px 223px 1fr; align-items: center; height: 13px; padding: 0 4px; column-gap: 2px; }
.dlgtop > label { text-align: right; }
.dlgtop .pick { height: 11px; }
.withicon svg { width: 9px; height: 9px; margin-left: 1px; }
.pick.withicon select { padding-left: 0; }
.dlgtools { display: flex; align-items: center; gap: 2px; padding-left: 1px; }
.dlgtools svg { width: 9px; height: 9px; }
.dlgtools button { margin-left: 1px; white-space: nowrap; }
.dlgtools .caret { width: 5px; height: 5px; margin-left: 3px; }
.dlgmid { display: grid; grid-template-columns: 53px 223px 1fr; column-gap: 2px; padding: 1px 4px 0; height: 166px; }
.places { display: flex; border: 1px solid #b5bcc6; background: #a0a0a0; overflow: hidden; }
.places ul { flex: 1; display: flex; flex-direction: column; color: #fff; text-align: center; }
.places li { height: 28px; padding-top: 3px; line-height: 8px; white-space: nowrap; }
.places li svg { width: 14px; height: 14px; margin: 0 auto 3px; }
.places .vscroll .thumbbar { width: 7px; height: 94px; margin: 18px 0 auto; }
.centre { display: flex; flex-direction: column; gap: 1px; }
.files { flex: 1; background: #fff; }
.listing { width: 87%; height: 100%; border-right: 1px solid #eee; }
.colhead { display: flex; height: 11px; padding: 2px 2px 0; }
.colhead svg { width: 6px; height: 4px; margin: -2px auto 0; }
.filerow { display: flex; align-items: center; gap: 1px; height: 10px; margin-left: 2px; background: #d9d9d9; }
.namerow { display: grid; grid-template-columns: 33px 1fr; column-gap: 2px; align-items: center; height: 10px; }
.namerow label { justify-self: end; }
.namerow .pick { height: 10px; }
.namerow input, .pick .mono, .factor { font: 5px/8px "Liberation Mono", "Noto Sans CJK SC", monospace; }
.preview { margin: 0 1px; padding: 0; height: 71px; border: 1px solid #dedede; min-width: 0; }
.preview legend { margin-left: 3px; padding: 0 1px; line-height: 6px; }

.dlgopts { display: grid; grid-template-columns: 80px 145px 1fr; padding: 0 4px; margin-top: 8px; }
.optleft { display: flex; flex-direction: column; justify-content: space-between; align-items: flex-start; }
.check { display: flex; align-items: center; gap: 1px; height: 10px; }
.check input { margin: 0 1px; }
.marked { outline: 2px solid var(--red); outline-offset: 0; }
.optleft .marked { padding-right: 1px; }
.btn { display: flex; align-items: center; justify-content: center; gap: 8px; width: 46px; height: 10px; border: 1px solid #adadad; background: #e4e4e4; }
.optmid { display: grid; grid-template-columns: 44px 48px 27px; grid-auto-rows: 10px; gap: 1px; align-items: center; justify-self: start; width: 126px; margin: -7px 0 -1px 1px; padding: 7px 0 1px 1px; }
.optmid > label:not(.check) { grid-column: 1; justify-self: end; }
.optmid .pick { height: 10px; margin-left: 2px; }
.factor { height: 9px; border: 1px solid #ddd; color: #888; }
.optmid .fix { grid-column: 2 / 4; margin-left: 2px; }
.optright { display: grid; grid-auto-rows: 10px; row-gap: 1px; }
.place { display: grid; grid-template-columns: 28px 101px; column-gap: 2px; align-items: center; }
.place label { justify-self: end; }
.place .pick { height: 10px; }
.place.marked { outline-offset: 1px; position: relative; z-index: 1; }
.off .pick, .check.off { color: #999; }
.off .pick { background: #d2d2d2; }
.optright .check { margin-left: 30px; }
.check.off input { border-color: #aaa; opacity: .6; }
.actions { display: flex; gap: 6px; margin-left: 30px; }
```
